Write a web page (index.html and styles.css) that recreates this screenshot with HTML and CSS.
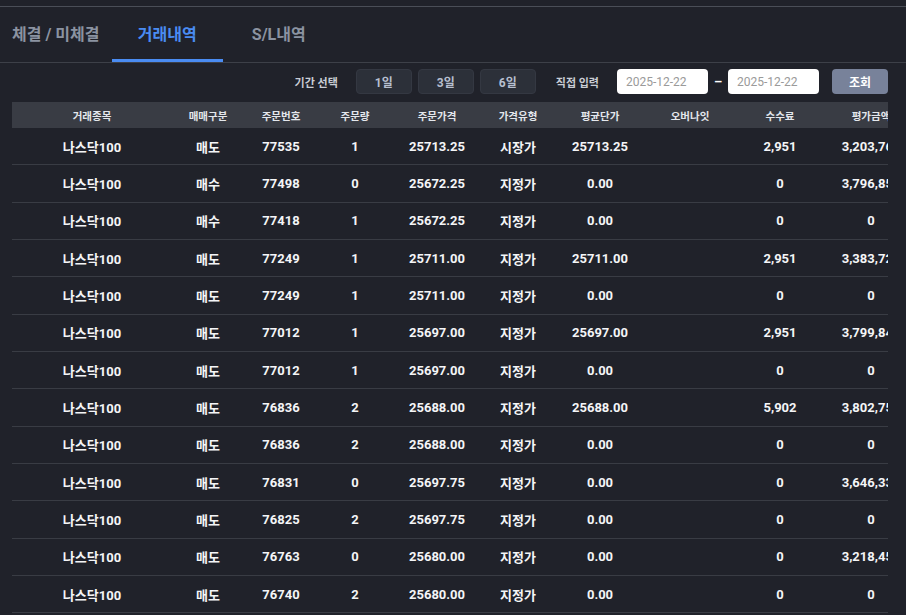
FILE: index.html
```html
<!DOCTYPE html>
<html lang="ko">
<head>
  <meta charset="UTF-8">
  <title>거래내역</title>
  <link rel="stylesheet" href="styles.css">
</head>
<body>
  <div class="panel">
    <div class="tabs">
      <div class="tab">체결 / 미체결</div>
      <div class="tab active">거래내역</div>
      <div class="tab">S/L내역</div>
    </div>

    <div class="filter">
      <span class="label">기간 선택</span>
      <button class="period">1일</button>
      <button class="period">3일</button>
      <button class="period">6일</button>
      <span class="label direct">직접 입력</span>
      <input class="date" type="text" placeholder="2025-12-22">
      <span class="dash">–</span>
      <input class="date" type="text" placeholder="2025-12-22">
      <button class="search">조회</button>
    </div>

    <div class="table-wrap">
      <table class="history">
        <colgroup>
          <col style="width:160px"><col style="width:72px"><col style="width:74px"><col style="width:74px"><col style="width:90px">
          <col style="width:72px"><col style="width:92px"><col style="width:88px"><col style="width:92px"><col style="width:90px">
        </colgroup>
        <thead>
          <tr>
            <th>거래종목</th><th>매매구분</th><th>주문번호</th><th>주문량</th><th>주문가격</th>
            <th>가격유형</th><th>평균단가</th><th>오버나잇</th><th>수수료</th><th>평가금액</th>
          </tr>
        </thead>
        <tbody>
          <tr><td>나스닥100</td><td>매도</td><td>77535</td><td>1</td><td>25713.25</td><td>시장가</td><td>25713.25</td><td></td><td>2,951</td><td>3,203,760</td></tr>
          <tr><td>나스닥100</td><td>매수</td><td>77498</td><td>0</td><td>25672.25</td><td>지정가</td><td>0.00</td><td></td><td>0</td><td>3,796,850</td></tr>
          <tr><td>나스닥100</td><td>매수</td><td>77418</td><td>1</td><td>25672.25</td><td>지정가</td><td>0.00</td><td></td><td>0</td><td>0</td></tr>
          <tr><td>나스닥100</td><td>매도</td><td>77249</td><td>1</td><td>25711.00</td><td>지정가</td><td>25711.00</td><td></td><td>2,951</td><td>3,383,720</td></tr>
          <tr><td>나스닥100</td><td>매도</td><td>77249</td><td>1</td><td>25711.00</td><td>지정가</td><td>0.00</td><td></td><td>0</td><td>0</td></tr>
          <tr><td>나스닥100</td><td>매도</td><td>77012</td><td>1</td><td>25697.00</td><td>지정가</td><td>25697.00</td><td></td><td>2,951</td><td>3,799,840</td></tr>
          <tr><td>나스닥100</td><td>매도</td><td>77012</td><td>1</td><td>25697.00</td><td>지정가</td><td>0.00</td><td></td><td>0</td><td>0</td></tr>
          <tr><td>나스닥100</td><td>매도</td><td>76836</td><td>2</td><td>25688.00</td><td>지정가</td><td>25688.00</td><td></td><td>5,902</td><td>3,802,750</td></tr>
          <tr><td>나스닥100</td><td>매도</td><td>76836</td><td>2</td><td>25688.00</td><td>지정가</td><td>0.00</td><td></td><td>0</td><td>0</td></tr>
          <tr><td>나스닥100</td><td>매도</td><td>76831</td><td>0</td><td>25697.75</td><td>지정가</td><td>0.00</td><td></td><td>0</td><td>3,646,330</td></tr>
          <tr><td>나스닥100</td><td>매도</td><td>76825</td><td>2</td><td>25697.75</td><td>지정가</td><td>0.00</td><td></td><td>0</td><td>0</td></tr>
          <tr><td>나스닥100</td><td>매도</td><td>76763</td><td>0</td><td>25680.00</td><td>지정가</td><td>0.00</td><td></td><td>0</td><td>3,218,450</td></tr>
          <tr><td>나스닥100</td><td>매도</td><td>76740</td><td>2</td><td>25680.00</td><td>지정가</td><td>0.00</td><td></td><td>0</td><td>0</td></tr>
        </tbody>
      </table>
    </div>
  </div>
</body>
</html>
```

FILE: styles.css
```css
body {
  margin: 0;
  padding-top: 6px;
  background: #20222a;
  font-family: Roboto, "Noto Sans CJK KR", sans-serif;
  color: #eef0f3;
  overflow: hidden;
}

.panel {
  border-top: 1px solid #4a4e57;
}

.tabs {
  display: flex;
  height: 55px;
  border-bottom: 1px solid #3d4048;
}

.tab {
  width: 111.5px;
  box-sizing: border-box;
  text-align: center;
  font-size: 16px;
  font-weight: 700;
  color: #8b93a1;
  padding-top: 14px;
  border-bottom: 3px solid transparent;
}

.tab.active {
  color: #4a8cf2;
  border-bottom-color: #4a8cf2;
}

.filter {
  display: flex;
  align-items: center;
  justify-content: flex-end;
  height: 37px;
  padding: 0 18px 0 12px;
}

.label {
  font-size: 11px;
  font-weight: 700;
  color: #c9cdd5;
  margin-right: 18px;
}

.label.direct {
  margin-left: 14px;
}

.period {
  width: 56px;
  height: 25px;
  margin-right: 6px;
  background: #2c3039;
  border: 1px solid #343842;
  border-radius: 4px;
  color: #b7bfcf;
  font-family: inherit;
  font-size: 12px;
  font-weight: 700;
}

.date {
  width: 91px;
  height: 25px;
  box-sizing: border-box;
  border: none;
  border-radius: 4px;
  background: #fff;
  padding-left: 9px;
  font-family: inherit;
  font-size: 12px;
}

.date::placeholder {
  color: #9a9a9a;
}

.dash {
  width: 20px;
  text-align: center;
  font-size: 13px;
  font-weight: 700;
  color: #fff;
}

.search {
  width: 56px;
  height: 25px;
  margin-left: 13px;
  border: none;
  border-radius: 4px;
  background: #78829a;
  color: #fff;
  font-family: inherit;
  font-size: 12px;
  font-weight: 700;
}

.table-wrap {
  margin: 2px 18px 0 12px;
  overflow: hidden;
}

.history {
  border-collapse: collapse;
  table-layout: fixed;
  width: 904px;
}

.history th {
  height: 26px;
  padding: 0;
  background: #393c44;
  font-size: 10.5px;
  font-weight: 700;
  color: #e4e7ec;
}

.history td {
  height: 36.33px;
  padding: 0;
  text-align: center;
  font-size: 13px;
  font-weight: 700;
  color: #f4f5f7;
  border-bottom: 1px solid #393c44;
  white-space: nowrap;
}
```
